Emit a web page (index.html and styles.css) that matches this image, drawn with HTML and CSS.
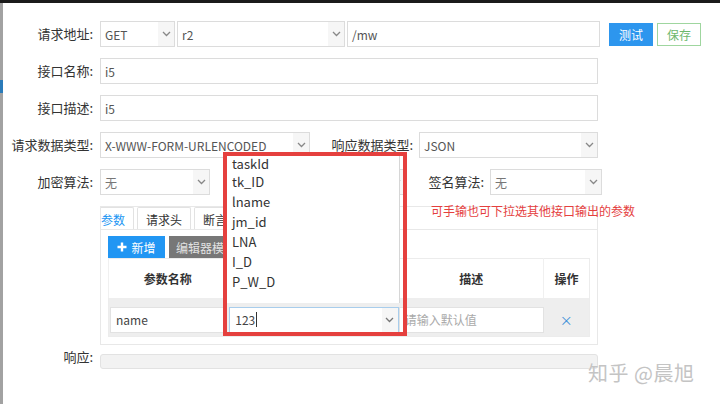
FILE: index.html
```html
<!DOCTYPE html>
<html lang="zh-CN">
<head>
  <meta charset="UTF-8">
  <meta name="viewport" content="width=device-width, initial-scale=1.0">
  <title>接口编辑</title>
  <link rel="stylesheet" href="styles.css">
</head>
<body>

  <div class="topBar"></div>

  <div class="frame">
    <div class="sideStrip"></div>

    <div class="dialog">

      <div class="formRow">
        <span class="formRow__label">请求地址:</span>
        <div class="ctl ctl--method">GET<span class="ctl__chev"><svg width="9" height="6" viewBox="0 0 9 6"><polyline points="1,1 4.5,4.5 8,1" fill="none" stroke="#888" stroke-width="1.3"/></svg></span></div>
        <div class="ctl ctl--host">r2<span class="ctl__chev"><svg width="9" height="6" viewBox="0 0 9 6"><polyline points="1,1 4.5,4.5 8,1" fill="none" stroke="#888" stroke-width="1.3"/></svg></span></div>
        <div class="ctl ctl--path">/mw</div>
        <button type="button" class="btn btn--primary">测试</button>
        <button type="button" class="btn btn--outline">保存</button>
      </div>

      <div class="formRow">
        <span class="formRow__label">接口名称:</span>
        <div class="ctl ctl--wide">i5</div>
      </div>

      <div class="formRow">
        <span class="formRow__label">接口描述:</span>
        <div class="ctl ctl--wide">i5</div>
      </div>

      <div class="formRow">
        <span class="formRow__label">请求数据类型:</span>
        <div class="ctl ctl--reqType">X-WWW-FORM-URLENCODED<span class="ctl__chev"><svg width="9" height="6" viewBox="0 0 9 6"><polyline points="1,1 4.5,4.5 8,1" fill="none" stroke="#888" stroke-width="1.3"/></svg></span></div>
        <span class="formRow__label formRow__label--resType">响应数据类型:</span>
        <div class="ctl ctl--resType">JSON<span class="ctl__chev"><svg width="9" height="6" viewBox="0 0 9 6"><polyline points="1,1 4.5,4.5 8,1" fill="none" stroke="#888" stroke-width="1.3"/></svg></span></div>
      </div>

      <div class="formRow">
        <span class="formRow__label">加密算法:</span>
        <div class="ctl ctl--encrypt ctl--muted">无<span class="ctl__chev"><svg width="9" height="6" viewBox="0 0 9 6"><polyline points="1,1 4.5,4.5 8,1" fill="none" stroke="#888" stroke-width="1.3"/></svg></span></div>
        <div class="ctl ctl--key"><span class="ctl__chev"><svg width="9" height="6" viewBox="0 0 9 6"><polyline points="1,1 4.5,4.5 8,1" fill="none" stroke="#888" stroke-width="1.3"/></svg></span></div>
        <span class="formRow__label formRow__label--sign">签名算法:</span>
        <div class="ctl ctl--sign ctl--muted">无<span class="ctl__chev"><svg width="9" height="6" viewBox="0 0 9 6"><polyline points="1,1 4.5,4.5 8,1" fill="none" stroke="#888" stroke-width="1.3"/></svg></span></div>
      </div>

      <div class="tabs">
        <div class="tabs__nav">
          <span class="tabs__item tabs__item--active">请求参数</span>
          <span class="tabs__item">请求头</span>
          <span class="tabs__item">断言</span>
        </div>
        <div class="tabs__panel">
          <div class="toolbar">
            <button type="button" class="btn btn--add"><svg width="10" height="10" viewBox="0 0 10 10"><path d="M5 0.5V9.5M0.5 5H9.5" stroke="#fff" stroke-width="2.4"/></svg>新增</button>
            <button type="button" class="btn btn--dark">编辑器模式</button>
          </div>
          <table class="paramTable">
            <thead>
              <tr>
                <th class="paramTable__name">参数名称</th>
                <th class="paramTable__default">默认值</th>
                <th class="paramTable__desc">描述</th>
                <th class="paramTable__op">操作</th>
              </tr>
            </thead>
            <tbody>
              <tr>
                <td><div class="ctl ctl--cell">name</div></td>
                <td><div class="ctl ctl--cell ctl--focus">123<span class="caret"></span><span class="ctl__chev"><svg width="9" height="6" viewBox="0 0 9 6"><polyline points="1,1 4.5,4.5 8,1" fill="none" stroke="#777" stroke-width="1.3"/></svg></span></div></td>
                <td><div class="ctl ctl--cell ctl--placeholder">请输入默认值</div></td>
                <td class="paramTable__remove">×</td>
              </tr>
            </tbody>
          </table>
        </div>
      </div>

      <div class="formRow formRow--response">
        <span class="formRow__label">响应:</span>
        <div class="responseBox"></div>
      </div>

      <!-- dropdown of the default value select, boxed in red -->
      <div class="pickHint">
        <ul class="pickHint__list">
          <li>taskId</li>
          <li>tk_ID</li>
          <li>lname</li>
          <li>jm_id</li>
          <li>LNA</li>
          <li>I_D</li>
          <li>P_W_D</li>
        </ul>
      </div>

      <span class="hintText">可手输也可下拉选其他接口输出的参数</span>

      <span class="watermark">知乎 @晨旭</span>
    </div>
  </div>

</body>
</html>
```

FILE: styles.css
```css
* {
  box-sizing: border-box;
  margin: 0;
  padding: 0;
}
body {
  width: 720px;
  height: 404px;
  overflow: hidden;
  background: #fff;
  color: #333;
  font-family: "Noto Sans CJK SC", "Noto Sans", sans-serif;
  font-size: 12px;
}
li {
  list-style: none;
}
button {
  font-family: inherit;
}
.topBar {
  height: 3px;
  background: #1b1b1b;
}
.frame {
  display: flex;
  height: 401px;
}
.sideStrip {
  width: 3px;
  background: linear-gradient(to bottom, #a2a2a2 77px, #2b7bb9 77px, #2b7bb9 90px, #a2a2a2 90px);
}
.dialog {
  flex-grow: 1;
  position: relative;
  padding-top: 18px;
}

/* form rows */
.formRow {
  display: flex;
  align-items: center;
  height: 26px;
  margin-bottom: 11px;
}
.formRow__label {
  width: 90px;
  margin-right: 7px;
  text-align: right;
  font-size: 13px;
  line-height: 16px;
  color: #333;
  white-space: nowrap;
}
.formRow__label--resType {
  width: 103px;
  margin-right: 6px;
}
.formRow__label--sign {
  width: 79px;
  margin-right: 6px;
}
.ctl {
  display: flex;
  align-items: center;
  height: 26px;
  padding-left: 4px;
  border: 1px solid #dcdcdc;
  background: #fff;
  color: #555;
  font-size: 12px;
  white-space: nowrap;
  overflow: hidden;
}
.ctl__chev {
  display: flex;
  align-items: center;
  justify-content: center;
  align-self: stretch;
  width: 16px;
  margin-left: auto;
  background: #f6f6f6;
}
.ctl--muted {
  color: #777;
}
.ctl--method {
  width: 75px;
  margin-right: 2px;
}
.ctl--host {
  width: 168px;
  margin-right: 2px;
}
.ctl--path {
  width: 253px;
  margin-right: 9px;
}
.ctl--wide {
  width: 498px;
}
.ctl--reqType {
  width: 210px;
}
.ctl--resType {
  width: 179px;
}
.ctl--encrypt {
  width: 110px;
}
.ctl--key {
  width: 170px;
  margin-left: 25px;
}
.ctl--sign {
  width: 112px;
}

/* buttons */
.btn {
  display: flex;
  align-items: center;
  justify-content: center;
  height: 23px;
  font-size: 12px;
  border: 1px solid transparent;
  cursor: pointer;
}
.btn--primary {
  width: 44px;
  margin-right: 4px;
  background: #2d96ee;
  border-color: #2d96ee;
  color: #fff;
}
.btn--outline {
  width: 44px;
  background: #fff;
  border-color: #9fd69f;
  color: #6db86d;
}
.btn--add {
  width: 57px;
  height: 22px;
  gap: 4px;
  background: #2196f3;
  color: #fff;
}
.btn--dark {
  width: 74px;
  height: 22px;
  margin-left: 4px;
  background: #777;
  color: #e2e2e2;
}

/* tabs */
.tabs {
  width: 498px;
  margin: 8px 0 0 97px;
  border: 1px solid #e8e8e8;
}
.tabs__nav {
  display: flex;
  height: 23px;
  gap: 3px;
  overflow: hidden;
  border-bottom: 1px solid #e8e8e8;
}
.tabs__item {
  display: flex;
  align-items: center;
  height: 23px;
  padding: 0 8px;
  border: 1px solid #e2e2e2;
  border-bottom: none;
  border-radius: 2px 2px 0 0;
  font-size: 12px;
  color: #333;
  white-space: nowrap;
}
.tabs__item--active {
  margin-left: -33px;
  color: #2196f3;
  background: #fff;
}
.tabs__panel {
  padding: 6px 7px 7px 7px;
}
.toolbar {
  display: flex;
}

/* params table */
.paramTable {
  width: 482px;
  border-collapse: collapse;
  border: 1px solid #ececec;
}
.paramTable th {
  height: 39px;
  font-size: 12px;
  font-weight: 700;
  color: #333;
  border-left: 1px solid #f0f0f0;
  background: #fff;
}
.paramTable__name {
  width: 119px;
}
.paramTable__default {
  width: 172px;
}
.paramTable__desc {
  width: 145px;
}
.paramTable__op {
  width: 46px;
}
.paramTable td {
  height: 39px;
  padding: 9px 0 3px 0;
  background: #eee;
  vertical-align: top;
}
.ctl--cell {
  height: 26px;
  padding-left: 5px;
  border-color: #e2e2e2;
  color: #444;
}
.paramTable td:first-child .ctl--cell {
  margin-left: 1px;
}
.ctl--focus {
  margin-left: 2px;
  border-color: #a8cdec;
}
.ctl--placeholder {
  color: #aaa;
}
.caret {
  width: 1px;
  height: 15px;
  margin-left: 1px;
  background: #333;
}
.paramTable__remove {
  text-align: center;
  vertical-align: middle !important;
  color: #3b8fd9;
  font-size: 13px;
}

/* response */
.formRow--response {
  align-items: flex-start;
  height: 15px;
  margin-top: 9px;
}
.formRow--response .formRow__label {
  margin-top: -5px;
}
.responseBox {
  width: 498px;
  height: 15px;
  background: #f2f2f2;
  border: 1px solid #e2e2e2;
  border-radius: 3px;
}

/* overlays */
.pickHint {
  position: absolute;
  left: 220px;
  top: 149px;
  width: 184px;
  height: 184px;
  border: 4px solid #e5403e;
}
.pickHint__list {
  height: 147px;
  overflow: hidden;
  background: #fff;
  border-right: 1px solid #d6d6d6;
  margin-right: 3px;
}
.pickHint__list li {
  height: 20px;
  line-height: 20px;
  padding-left: 5px;
  font-size: 13px;
  color: #333;
}
.pickHint__list li:first-child {
  height: 16px;
  line-height: 16px;
}
.hintText {
  position: absolute;
  left: 428px;
  top: 200px;
  font-size: 12px;
  line-height: 16px;
  color: #e5403e;
  white-space: nowrap;
}
.watermark {
  position: absolute;
  left: 585px;
  top: 356px;
  font-size: 20px;
  line-height: 28px;
  color: #c4c4c4;
  letter-spacing: 0.5px;
  text-shadow: 0 0 1px #fff;
  white-space: nowrap;
}
```
